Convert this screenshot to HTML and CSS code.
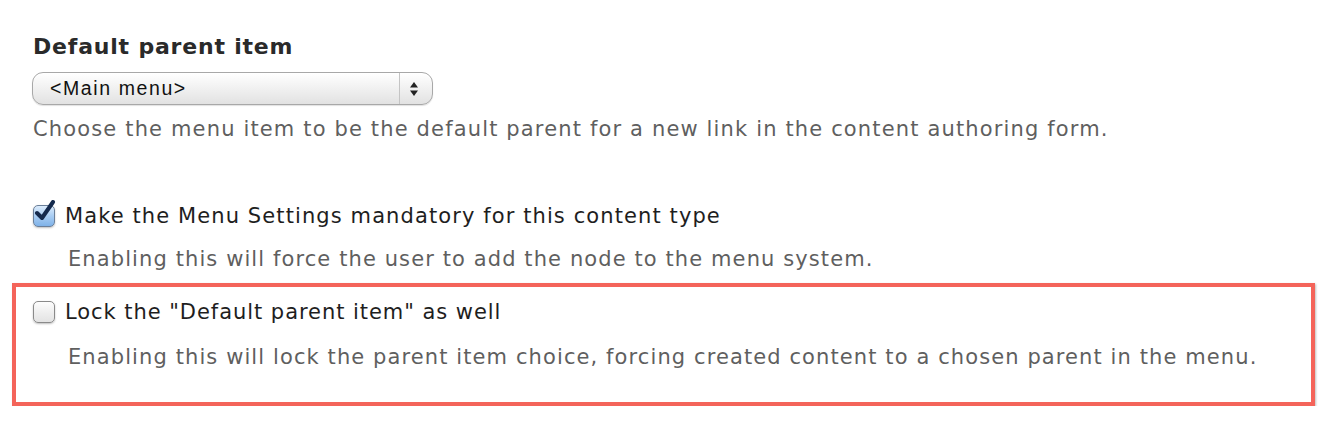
FILE: index.html
```html
<!DOCTYPE html>
<html>
<head>
<meta charset="utf-8">
<link rel="stylesheet" href="styles.css">
</head>
<body>
<div class="page">
  <div class="field">
    <h3 class="field-label">Default parent item</h3>
    <div class="select">
      <span class="select-value">&lt;Main menu&gt;</span>
      <span class="select-arrows">
        <svg width="10" height="16" viewBox="0 0 10 16"><path d="M5 1 L9 6.5 L1 6.5 Z" fill="#222"/><path d="M5 15 L9 9.5 L1 9.5 Z" fill="#222"/></svg>
      </span>
    </div>
    <div class="desc desc-select">Choose the menu item to be the default parent for a new link in the content authoring form.</div>
  </div>

  <div class="check-item check-first">
    <div class="check-row">
      <span class="checkbox checked">
        <svg class="checkmark" width="26" height="26" viewBox="0 0 26 26"><path d="M5 13 L10 18 L21 2" fill="none" stroke="#152a4d" stroke-width="4" stroke-linecap="round" stroke-linejoin="round"/></svg>
      </span>
      <span class="check-label">Make the Menu Settings mandatory for this content type</span>
    </div>
    <div class="desc desc-check">Enabling this will force the user to add the node to the menu system.</div>
  </div>

  <div class="highlight">
    <div class="check-row">
      <span class="checkbox"></span>
      <span class="check-label check-label-lock">Lock the "Default parent item" as well</span>
    </div>
    <div class="desc desc-check">Enabling this will lock the parent item choice, forcing created content to a chosen parent in the menu.</div>
  </div>
</div>
</body>
</html>
```

FILE: styles.css
```css
html, body {
  margin: 0;
  padding: 0;
  background: #ffffff;
}
body {
  font-family: "DejaVu Sans", "Lucida Grande", Verdana, sans-serif;
  color: #222;
}
.page {
  padding: 30px 0 0 12px;
  width: 1304px;
}
.field {
  padding-left: 21px;
}
.field-label {
  margin: 0;
  font-size: 22px;
  letter-spacing: 0.8px;
  font-weight: bold;
  line-height: 34px;
  color: #2a2a2a;
}
.select {
  margin-top: 8px;
  margin-left: -1px;
  width: 399px;
  height: 31px;
  border: 1px solid #a8a8a8;
  border-radius: 11px;
  background: linear-gradient(#ffffff 0%, #f2f2f2 45%, #e2e2e2 100%);
  box-shadow: inset 0 1px 0 #fff, 0 1px 1px rgba(0,0,0,0.12);
  display: flex;
  align-items: center;
  box-sizing: content-box;
}
.select-value {
  flex: 1;
  padding-left: 17px;
  font-family: "Liberation Sans", Arial, sans-serif;
  font-size: 19.5px;
  letter-spacing: 1.6px;
  color: #111;
}
.select-arrows {
  width: 28px;
  height: 100%;
  border-left: 1px solid #c4c4c4;
  display: flex;
  align-items: center;
  justify-content: center;
  padding-right: 4px;
}
.desc {
  font-size: 21px;
  letter-spacing: 1.1px;
  color: #5f5f5f;
  line-height: 28px;
}
.desc-select {
  margin-top: 10px;
  letter-spacing: 1.15px;
}
.check-item {
  padding-left: 21px;
}
.check-first {
  margin-top: 58px;
}
.check-row {
  display: flex;
  align-items: center;
  gap: 10px;
  height: 30px;
}
.checkbox {
  position: relative;
  width: 20px;
  height: 20px;
  border: 1px solid #8a8a8a;
  border-radius: 5px;
  background: linear-gradient(#fdfdfd 0%, #efefef 50%, #e3e3e3 100%);
  box-shadow: 0 1px 2px rgba(0,0,0,0.25);
  flex: none;
}
.checkbox.checked {
  background: linear-gradient(#dcecfc 0%, #a9cdf3 50%, #7fb2e8 100%);
  border-color: #6b7f99;
}
.checkmark {
  position: absolute;
  left: -2px;
  top: -6px;
}
.check-label {
  font-size: 21px;
  letter-spacing: 1.1px;
  color: #1e1e1e;
}
.check-label-lock {
  letter-spacing: 0.95px;
}
.desc-check {
  margin-top: 14px;
  padding-left: 35px;
}
.highlight {
  margin-top: 10px;
  border: 4px solid #f4645a;
  box-shadow: 1px 1px 2px rgba(0,0,0,0.25);
  padding: 10px 0 31px 17px;
  width: 1303px;
  box-sizing: border-box;
}
.highlight .desc-check {
  margin-top: 16px;
}
```
